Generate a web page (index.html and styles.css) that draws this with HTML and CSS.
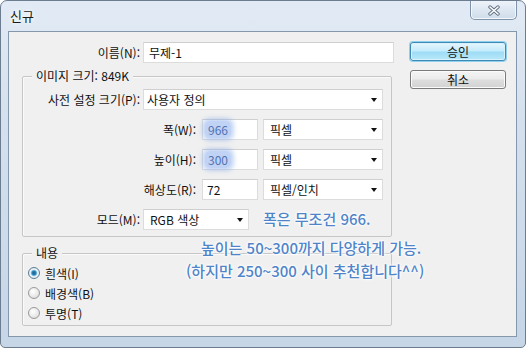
FILE: index.html
```html
<!DOCTYPE html>
<html lang="ko">
<head>
<meta charset="utf-8">
<title>신규</title>
<link rel="stylesheet" href="styles.css">
</head>
<body>
<div class="window">
  <div class="titlebar">
    <span class="title">신규</span>
    <div class="close">
      <svg width="16" height="11" viewBox="0 0 16 11">
        <path d="M4 2 L12 9 M12 2 L4 9" stroke="#5f6f82" stroke-width="3.4" stroke-linecap="round" fill="none"/>
        <path d="M4 2 L12 9 M12 2 L4 9" stroke="#ffffff" stroke-width="1.6" stroke-linecap="round" fill="none"/>
      </svg>
    </div>
  </div>
  <div class="client">
    <div class="form">
      <div class="row name-row">
        <span class="lbl lbl-name">이름(N):</span>
        <div class="field name-field">무제-1</div>
      </div>
      <div class="group size-group">
        <span class="legend">이미지 크기: 849K</span>
        <div class="row">
          <span class="lbl lbl-short">사전 설정 크기(P):</span>
          <div class="field select preset-select">사용자 정의<i class="arrow"></i></div>
        </div>
        <div class="row gap-row">
          <span class="lbl lbl-long">폭(W):</span>
          <div class="field num-field"><span class="hl">966</span></div>
          <div class="field select unit-select">픽셀<i class="arrow"></i></div>
        </div>
        <div class="row gap-row">
          <span class="lbl lbl-long">높이(H):</span>
          <div class="field num-field"><span class="hl">300</span></div>
          <div class="field select unit-select">픽셀<i class="arrow"></i></div>
        </div>
        <div class="row gap-row">
          <span class="lbl lbl-long">해상도(R):</span>
          <div class="field num-field">72</div>
          <div class="field select unit-select">픽셀/인치<i class="arrow"></i></div>
        </div>
        <div class="row gap-row">
          <span class="lbl lbl-short">모드(M):</span>
          <div class="field select mode-select">RGB 색상<i class="arrow"></i></div>
        </div>
      </div>
      <div class="group content-group">
        <span class="legend">내용</span>
        <div class="radio-row"><span class="radio checked"></span>흰색(I)</div>
        <div class="radio-row"><span class="radio"></span>배경색(B)</div>
        <div class="radio-row"><span class="radio"></span>투명(T)</div>
      </div>
    </div>
    <div class="buttons">
      <div class="btn btn-default">승인</div>
      <div class="btn btn-cancel">취소</div>
    </div>
  </div>
  <div class="note">
    <div class="note-line l1">폭은 무조건 966.</div>
    <div class="note-line l2">높이는 50~300까지 다양하게 가능.</div>
    <div class="note-line l3">(하지만 250~300 사이 추천합니다^^)</div>
  </div>
</div>
</body>
</html>
```

FILE: styles.css
```css
* { box-sizing: border-box; }
html, body { margin: 0; padding: 0; background: #ffffff; }
body {
  font-family: "Noto Sans CJK KR", "Noto Sans", sans-serif;
  font-size: 12px;
  color: #111;
}
.window {
  position: relative;
  width: 526px;
  height: 348px;
  border: 1px solid #6c7d90;
  border-radius: 7px 7px 5px 5px;
  background: linear-gradient(180deg, #e2ebf5 0%, #d4e0ed 35%, #c6d6e7 100%);
  overflow: hidden;
}
.titlebar {
  display: flex;
  align-items: flex-start;
  height: 30px;
  padding-left: 9px;
}
.title {
  margin-top: 7px;
  font-size: 13px;
  line-height: 16px;
  color: #1a1a1a;
  text-shadow: 0 0 6px #ffffff, 0 0 3px #ffffff;
}
.close {
  margin-left: auto;
  margin-right: 8px;
  width: 47px;
  height: 19px;
  border: 1px solid #7f92a8;
  border-top: none;
  border-radius: 0 0 5px 5px;
  background: linear-gradient(180deg, #eef3f9 0%, #dde7f2 50%, #cfdcea 100%);
  box-shadow: inset 0 -1px 0 #f4f8fc, inset 1px 0 0 #f4f8fc, inset -1px 0 0 #f4f8fc;
  display: flex;
  align-items: center;
  justify-content: center;
}
.client {
  display: flex;
  margin-left: 7px;
  width: 509px;
  height: 306px;
  border: 1px solid #8597ad;
  background: #f0f0f0;
}
.form {
  width: 385px;
  flex: none;
}
.row {
  display: flex;
  height: 21px;
  align-items: stretch;
}
.gap-row { margin-top: 9px; }
.name-row { margin-top: 10px; }
.lbl {
  display: flex;
  align-items: center;
  justify-content: flex-end;
  flex: none;
  white-space: nowrap;
}
.lbl-name { width: 131px; margin-right: 3px; }
.lbl-short { width: 117px; margin-right: 3px; }
.lbl-long { width: 173px; margin-right: 6px; }
.field {
  position: relative;
  display: flex;
  align-items: center;
  flex: none;
  background: #ffffff;
  border: 1px solid #dcdcdc;
  border-top-color: #cfcfcf;
  padding-left: 4px;
  white-space: nowrap;
}
.name-field { width: 251px; padding-left: 5px; }
.preset-select { width: 240px; padding-left: 3px; }
.num-field { width: 56px; margin-right: 5px; padding-left: 4px; }
.unit-select { width: 120px; padding-left: 6px; }
.mode-select { width: 106px; padding-left: 6px; }
.arrow {
  position: absolute;
  right: 5px;
  top: 8px;
  width: 0;
  height: 0;
  border-top: 4px solid #111;
  border-left: 3.5px solid transparent;
  border-right: 3.5px solid transparent;
}
.hl {
  color: #5272b4;
  background: rgba(140, 175, 235, 0.55);
  border-radius: 5px;
  padding: 0 3px;
  margin-left: -2px;
  box-shadow: 0 0 4px 3px rgba(140, 175, 235, 0.5);
}
.group {
  position: relative;
  margin-left: 13px;
  width: 370px;
  border: 1px solid #c6c6c6;
  border-radius: 2px;
  box-shadow: inset 1px 1px 0 #fafafa;
}
.size-group {
  margin-top: 13px;
  padding: 12px 0 6px 0;
}
.content-group {
  margin-top: 16px;
  padding: 9px 0 2px 0;
}
.legend {
  position: absolute;
  top: -9px;
  left: 9px;
  padding: 0 4px;
  line-height: 16px;
  background: #f0f0f0;
  white-space: nowrap;
}
.radio-row {
  display: flex;
  align-items: center;
  height: 20px;
  padding-left: 5px;
}
.radio {
  width: 12px;
  height: 12px;
  border-radius: 50%;
  border: 1px solid #9a9a9a;
  background: radial-gradient(circle at 40% 35%, #ffffff 0%, #e9e9e9 55%, #d0d0d0 100%);
  margin-right: 5px;
  flex: none;
}
.radio.checked {
  border-color: #5a7d96;
  background: radial-gradient(circle at 50% 50%, #1f5f8c 0%, #2d7fb5 28%, #7fc3e8 40%, #eef4f8 52%, #d8dfe5 100%);
}
.buttons {
  display: flex;
  flex-direction: column;
  margin-left: 16px;
  width: 96px;
}
.btn {
  height: 19px;
  display: flex;
  align-items: center;
  justify-content: center;
  border-radius: 3px;
  font-size: 12px;
}
.btn-default {
  margin-top: 10px;
  border: 1px solid #3c8ab5;
  background: linear-gradient(180deg, #e6f6fd 0%, #c5ecfb 45%, #9fdcf6 55%, #b8e8fa 100%);
  box-shadow: 0 0 0 1px #8fd0ee, inset 0 0 0 1px #d8f2fc;
}
.btn-cancel {
  margin-top: 9px;
  border: 1px solid #7a7a7a;
  background: linear-gradient(180deg, #f4f4f4 0%, #ebebeb 45%, #dddddd 55%, #d2d2d2 100%);
  box-shadow: inset 0 0 0 1px #fbfbfb;
}
.note {
  position: absolute;
  left: 185px;
  top: 206px;
  color: #4f84c9;
  font-size: 15px;
  font-weight: 500;
  line-height: 23px;
  white-space: nowrap;
  text-shadow: 0 0 2px #ffffff, 0 0 2px #ffffff, 0 0 3px #ffffff, 0 0 4px #ffffff;
}
.l1 { padding-left: 77px; margin-bottom: 6px; }
.l2 { padding-left: 15px; }
.l3 { padding-left: 0; }
```
